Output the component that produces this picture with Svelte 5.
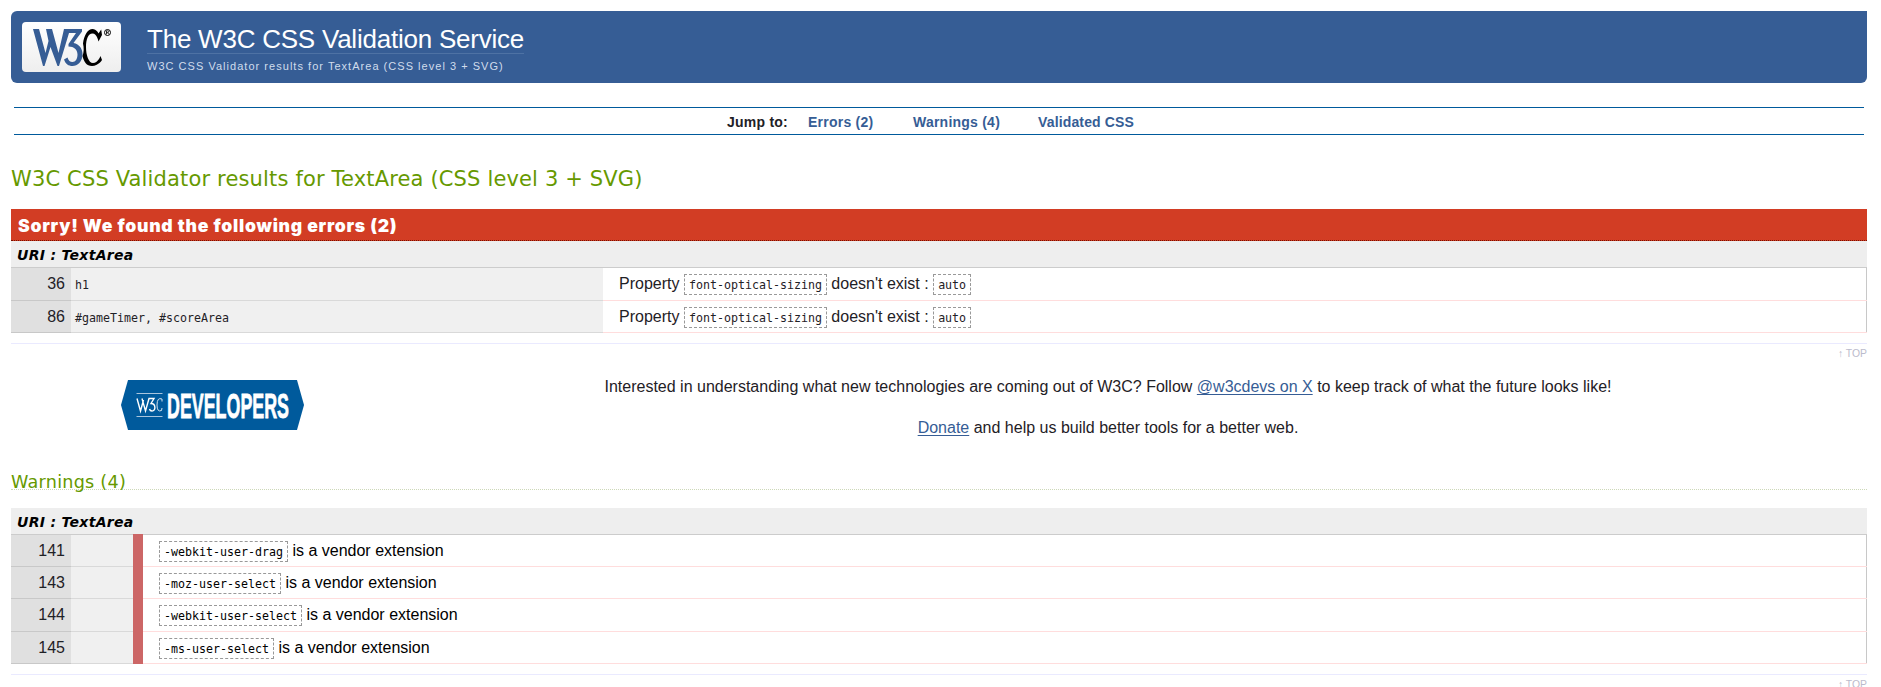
<script>
  const jumps = ['Errors (2)', 'Warnings (4)', 'Validated CSS'];
  const errors = [
    { line: 36, context: 'h1', property: 'font-optical-sizing', value: 'auto' },
    { line: 86, context: '#gameTimer, #scoreArea', property: 'font-optical-sizing', value: 'auto' }
  ];
  const warnings = [
    { line: 141, property: '-webkit-user-drag' },
    { line: 143, property: '-moz-user-select' },
    { line: 144, property: '-webkit-user-select' },
    { line: 145, property: '-ms-user-select' }
  ];
</script>

<div class="page">
  <header class="banner">
    <div class="logo">
      <svg width="99" height="50" viewBox="0 0 99 50" role="img" aria-label="W3C">
        <path fill="#365d95" d="M11 7h6l6.500 24 3-12L24 7h6l6.500 24L42 7h18v2.500L51.500 21c6 1 9 6 9 11.500 0 7-5 11.500-10 11.500-4 0-7-2-8.500-6.500l3.500-2c1 3 2.500 4.500 5 4.500 3 0 5-3 5-7.500 0-5-3.500-8-9-8v-2.500l7.500-11H47L37 44h-1.500l-7-19-6 19H21z" />
        <path d="M79.200 7.500 80 13l-3.500 6.500s-1.500-8-6-8c-4.500 0-6.500 6-6.500 13.500 0 8 2.600 16 7 16 5 0 7.500-7 7.500-7l1.500 4S76.500 44 70 44c-5.500 0-8-4-9.500-10 1.500-4 1.500-8 .5-12.500C62 13 66 7 70.500 7c4 0 6 4.500 6 4.500z" />
        <circle cx="85.500" cy="10.500" r="3" fill="none" stroke="#000" />
        <path fill="none" stroke="#000" stroke-width=".8" d="M84.500 12.300V8.800h1.200q1 0 1 .9t-1 .9h-1.200m1.100 0 1.200 1.700" />
      </svg>
    </div>
    <div class="titles">
      <h1>The W3C CSS Validation Service</h1>
      <p>W3C CSS Validator results for TextArea (CSS level 3 + SVG)</p>
    </div>
  </header>

  <nav>
    <strong>Jump to:</strong>
    {#each jumps as jump, i}<a class="jump{i}" href="#top">{jump}</a>{/each}
  </nav>

  <h2>W3C CSS Validator results for TextArea (CSS level 3 + SVG)</h2>

  <section>
    <h3 class="sorry"><span>Sorry! We found the following errors (2)</span></h3>
    <h4>URI : TextArea</h4>
    <div class="rows">
      {#each errors as e}
        <div class="row error">
          <span class="line">{e.line}</span>
          <span class="context">{e.context}</span>
          <span class="message">Property <code>{e.property}</code> doesn't exist : <code>{e.value}</code></span>
        </div>
      {/each}
    </div>
    <div class="top"><a href="#top">↑ TOP</a></div>
  </section>

  <aside>
    <svg class="badge" width="183" height="50" viewBox="0 0 183 50" role="img" aria-label="W3C Developers">
      <path fill="#005a9c" d="M7 0h169l7 25-7 25H7L0 25z" />
      <path stroke="#a9c5dd" d="M15.500 13.500h26M15.500 36.500h26" />
      <path fill="none" stroke="#fff" stroke-width="1.400" d="m16 18.500 3.500 12.500 3-11m-1.500-1.500 3.500 12.500 3.500-12.500H33l-3 5c5 0 5 7.500 1 7.500q-2 0-2.500-2" />
      <path fill="none" stroke="#d5e3ef" d="M41 21.500v-2.500q-5-2-5 6 0 7.500 4.500 5.500l.5-2.500" />
      <text x="46" y="37.500" textLength="122" lengthAdjust="spacingAndGlyphs">DEVELOPERS</text>
    </svg>
    <div class="promo">
      <p>Interested in understanding what new technologies are coming out of W3C? Follow <a href="#top">@w3cdevs on X</a> to keep track of what the future looks like!</p>
      <p><a href="#top">Donate</a> and help us build better tools for a better web.</p>
    </div>
  </aside>

  <section>
    <h3 class="warnings">Warnings (4)</h3>
    <h4>URI : TextArea</h4>
    <div class="rows">
      {#each warnings as w}
        <div class="row warning">
          <span class="line">{w.line}</span>
          <span class="context"></span>
          <span class="bar"></span>
          <span class="message"><code>{w.property}</code> is a vendor extension</span>
        </div>
      {/each}
    </div>
    <div class="top"><a href="#top">↑ TOP</a></div>
  </section>
</div>

<style>
  :global(body) {
    background: #fff;
    overflow: hidden;
  }
  .page {
    box-sizing: border-box;
    height: 687px;
    overflow: hidden;
    padding: 11px 14px 0 11px;
    font: 16px/20px "Liberation Sans", Arial, sans-serif;
    color: #1f2126;
  }
  h1, h2, h3, h4, p {
    margin: 0;
    font-weight: normal;
  }
  a {
    color: #365d95;
  }
  .banner {
    box-sizing: border-box;
    display: flex;
    height: 72px;
    padding: 11px;
    background: #365d95;
    border-radius: 6px 0 6px 6px;
  }
  .logo {
    width: 99px;
    height: 50px;
    border-radius: 4px;
    background: linear-gradient(#fff, #eee);
  }
  .titles {
    margin-left: 26px;
    margin-top: 1px;
  }
  h1 {
    width: 377px;
    height: 30px;
    line-height: 33px;
    font-size: 26px;
    letter-spacing: -0.23px;
    white-space: nowrap;
    color: #fff;
    border-bottom: 1px solid #4e72a4;
  }
  .titles p {
    margin-top: 6px;
    font-size: 11px;
    line-height: 13px;
    letter-spacing: 1.030px;
    white-space: nowrap;
    color: #d0dcec;
  }
  nav {
    box-sizing: border-box;
    display: flex;
    height: 28px;
    margin: 24px 3px 0;
    padding-left: 713px;
    border: solid #005a9c;
    border-width: 1px 0;
    font-size: 14px;
    line-height: 28px;
    font-weight: bold;
    letter-spacing: 0.23px;
    white-space: nowrap;
  }
  nav strong {
    width: 81px;
  }
  nav a {
    text-decoration: none;
  }
  .jump0 {
    width: 105px;
  }
  .jump1 {
    width: 125px;
  }
  .jump2 {
    letter-spacing: 0.15px;
  }
  h2 {
    height: 30px;
    margin-top: 28px;
    font: 21px/32px "DejaVu Sans", Verdana, sans-serif;
    letter-spacing: 0.155px;
    white-space: nowrap;
    color: #690;
  }
  .sorry {
    box-sizing: border-box;
    height: 32px;
    margin-top: 16px;
    padding-left: 7px;
    background: #d23d24;
    border-bottom: 1px dotted #7a1000;
    color: #fff;
    font: 900 17.600px/33px Inter, "Arial Black", sans-serif;
    letter-spacing: 0.74px;
  }
  h4 {
    height: 26px;
    padding-left: 6px;
    background: #eee;
    color: #000;
    font: italic bold 14px/28px "DejaVu Sans", Verdana, sans-serif;
    letter-spacing: 0.3px;
  }
  .rows {
    border-top: 1px solid #ccc;
    border-right: 1px solid #c8c8c8;
  }
  .row {
    display: grid;
    grid-template-rows: 100%;
    height: 32px;
    line-height: 31px;
    margin-right: -1px;
  }
  .error {
    grid-template-columns: 60px 532px 1fr;
  }
  .warning {
    grid-template-columns: 60px 62px 10px 1fr;
    color: #000;
  }
  .error:nth-child(1), .warning:nth-child(3) {
    height: 33px;
  }
  .line {
    padding-right: 6px;
    text-align: right;
    background: #e0e0e0;
    border-bottom: 1px solid #c8c8c8;
    color: #1f2126;
  }
  .context {
    padding-left: 4px;
    background: #f0f0f0;
    border-bottom: 1px solid #d9d9d9;
    font: 11.630px/34px "DejaVu Sans Mono", monospace;
  }
  .bar {
    margin-top: -1px;
    background: #c66;
  }
  .message {
    padding-left: 16px;
    border-bottom: 1px solid #fdd;
    white-space: nowrap;
  }
  code {
    padding: 3px 4px 2px;
    border: 1px dashed #999;
    font: 11.630px/14px "DejaVu Sans Mono", monospace;
  }
  .top {
    height: 24px;
    margin-top: 10px;
    border-top: 1px solid #eaeaff;
    text-align: right;
    font-size: 10.400px;
    line-height: 20px;
  }
  .top a {
    color: #bbc;
    text-decoration: none;
  }
  aside {
    display: flex;
    height: 103px;
  }
  .badge {
    flex: none;
    margin: 12px 0 0 110px;
    overflow: visible;
  }
  .badge text {
    font: bold 35px "Liberation Sans Narrow", "Liberation Sans", sans-serif;
    fill: #fff;
    stroke: #fff;
    stroke-width: 0.8px;
  }
  .promo {
    width: 1010px;
    margin: 9px 0 0 299px;
    text-align: center;
    white-space: nowrap;
  }
  .promo p {
    margin-bottom: 21px;
  }
  .promo a {
    text-underline-offset: 2px;
  }
  .warnings {
    box-sizing: border-box;
    height: 19px;
    border-bottom: 1px dotted #cdd8b8;
    margin-bottom: 18px;
    font: 17.600px/22px "DejaVu Sans", Verdana, sans-serif;
    letter-spacing: 0.25px;
    color: #690;
  }
</style>
